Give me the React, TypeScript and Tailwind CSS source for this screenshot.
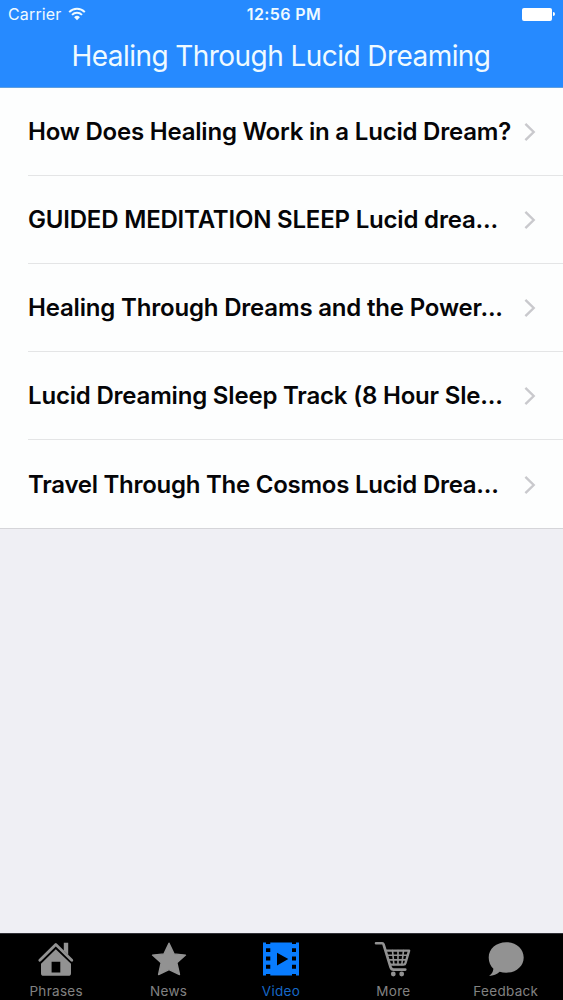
const rows = [
    { title: "How Does Healing Work in a Lucid Dream?", spacing: "tracking-[-0.21px]" },
    { title: "GUIDED MEDITATION SLEEP Lucid drea...", spacing: "tracking-[-0.19px]" },
    { title: "Healing Through Dreams and the Power...", spacing: "tracking-[-0.18px]" },
    { title: "Lucid Dreaming Sleep Track (8 Hour Sle...", spacing: "tracking-[-0.19px]" },
    { title: "Travel Through The Cosmos Lucid Drea...", spacing: "tracking-[-0.26px]" },
]

const HouseIcon = () => (
    <svg width="40" height="36" viewBox="0 0 40 36" fill="currentColor">
        <path d="M27.8 1.8h4.4V14l-4.4-4.4z" />
        <path d="M3.8 19.3 19.8 3.6l16 15.7" fill="none" stroke="currentColor" strokeWidth="2.8" strokeLinecap="round" strokeLinejoin="round" />
        <path fillRule="evenodd" d="M19.8 8.2 35 22.8V32.2q0 2.6-2.6 2.6H7.6Q5 34.8 5 32.2V22.8zM15.6 20.8v10.6h8.7V20.8z" />
    </svg>
)

const StarIcon = () => (
    <svg width="40" height="36" viewBox="0 0 40 36" fill="currentColor" stroke="currentColor" strokeWidth="1.4" strokeLinejoin="round">
        <path d="m20 2.2 5 10.7 11.5 1.2-8.6 7.7 2.6 11.7L20 28.6 9.6 33.5l2.5-11.7-8.6-7.7L15 12.9z" />
    </svg>
)

const FilmIcon = () => (
    <svg width="40" height="36" viewBox="0 0 40 36" fill="currentColor">
        <path
            fillRule="evenodd"
            d="M2 1.5h3V3h4.3V1.5H31V3h4V1.5h3v33h-3V33h-4v1.5H9.3V33H5v1.5H2zM5 7.3v3.8h4.3V7.3zM5 15.5v4h4.3v-4zM5 23.7v4h4.3v-4zM31 7.3v3.8h4V7.3zM31 15.5v4h4v-4zM31 23.7v4h4v-4zM16 11.8v12.8L27.3 18z"
        />
    </svg>
)

const CartIcon = () => (
    <svg width="40" height="36" viewBox="0 0 40 36" fill="none" stroke="currentColor" strokeLinecap="round" strokeLinejoin="round">
        <path d="M3 2.3h6.2q1 0 1.4 1.2L17.5 26q.8 2.6 3 2.6H32.3" strokeWidth="2.6" />
        <path d="M13.3 9.6h22.8L32.5 22q-.4 1.6-2 1.6H17.2" strokeWidth="2.4" />
        <path d="M14.5 14.2h20.2M15.8 18.9h17.4M19.5 9.6l1.4 14M25 9.6v14M30.5 9.6l-1.7 14" strokeWidth="1.6" />
        <circle cx="20.3" cy="33" r="2.4" fill="currentColor" stroke="none" />
        <circle cx="28.7" cy="33" r="2.4" fill="currentColor" stroke="none" />
    </svg>
)

const BubbleIcon = () => (
    <svg width="40" height="36" viewBox="0 0 40 36" fill="currentColor">
        <path d="M20.2 1.2c9.8 0 17.5 6.6 17.5 15.2S30 31.7 20.2 31.7c-2.3 0-4.5-.4-6.5-1-2.8 2.4-6.3 4-10.6 4.2 2.3-1.6 4.1-4 4.3-7.2C4.4 24.9 2.7 21 2.7 16.4 2.7 7.8 10.4 1.2 20.2 1.2z" />
    </svg>
)

const tabs = [
    { label: "Phrases", icon: HouseIcon, active: false },
    { label: "News", icon: StarIcon, active: false },
    { label: "Video", icon: FilmIcon, active: true },
    { label: "More", icon: CartIcon, active: false },
    { label: "Feedback", icon: BubbleIcon, active: false },
]

const WifiIcon = () => (
    <svg width="18" height="14" viewBox="0 0 18 14" fill="none" stroke="currentColor" strokeWidth="2">
        <path d="M1.2 5.1a11 11 0 0 1 15.6 0M4 7.9a7.1 7.1 0 0 1 10 0" />
        <path d="M9 13.2 6.1 10.2a4.1 4.1 0 0 1 5.8 0z" fill="currentColor" stroke="none" />
    </svg>
)

const StatusBar = () => (
    <div className="grid h-[28px] grid-cols-3 items-center px-2 text-[16px] leading-none">
        <div className="flex items-center gap-[6px]">
            <span className="tracking-[0.15px]">Carrier</span>
            <WifiIcon />
        </div>
        <span className="pl-[5px] text-center font-semibold tracking-[0.4px]">12:56 PM</span>
        <div className="flex items-center justify-end gap-px">
            <div className="h-[13px] w-[30px] rounded-[2px] bg-white"></div>
            <div className="h-[4px] w-[2px] rounded-r-full bg-white"></div>
        </div>
    </div>
)

const App = () => {
    return (
        <div className="flex h-[1000px] w-[563px] flex-col overflow-hidden bg-[#efeff4] font-['Inter',sans-serif]">
            <header className="h-[88px] border-b border-[#5f9fdf] bg-[#268aff] text-[#effaff]">
                <StatusBar />
                <h1 className="mt-[10px] whitespace-nowrap pr-px text-center text-[28px] font-normal leading-[36px] tracking-[-0.56px]">
                    Healing Through Lucid Dreaming
                </h1>
            </header>
            <ul className="border-b border-[#d5d5d9] bg-[#fdfefe]">
                {rows.map((row, index) => (
                    <li key={index} className="flex h-[88px] pl-[28px]">
                        <div className={`flex w-full items-center justify-between pr-[27px] ${index < rows.length - 1 ? "border-b border-[#e4e5e6]" : "pt-px"}`}>
                            <span className={`whitespace-nowrap text-[24px] font-semibold leading-[32px] text-[#050507] ${row.spacing}`}>{row.title}</span>
                            <svg width="12" height="20" viewBox="0 0 12 20" fill="none" stroke="#c9c9cd" strokeWidth="2.4" className="shrink-0">
                                <path d="m1.4 1.8 8.3 8.2-8.3 8.2" />
                            </svg>
                        </div>
                    </li>
                ))}
            </ul>
            <nav className="mt-auto grid h-[67px] grid-cols-5 border-t border-[#303036] bg-black pr-px">
                {tabs.map(({ label, icon: Icon, active }) => (
                    <div key={label} className={`flex flex-col items-center pt-[7px] ${active ? "text-[#087cff]" : "text-[#929292]"}`}>
                        <Icon />
                        <span className={`mt-[5px] text-[13.5px] leading-[18px] tracking-[0.3px] ${active ? "text-[#1668c8]" : "text-[#828282]"}`}>{label}</span>
                    </div>
                ))}
            </nav>
        </div>
    )
}

export default App
